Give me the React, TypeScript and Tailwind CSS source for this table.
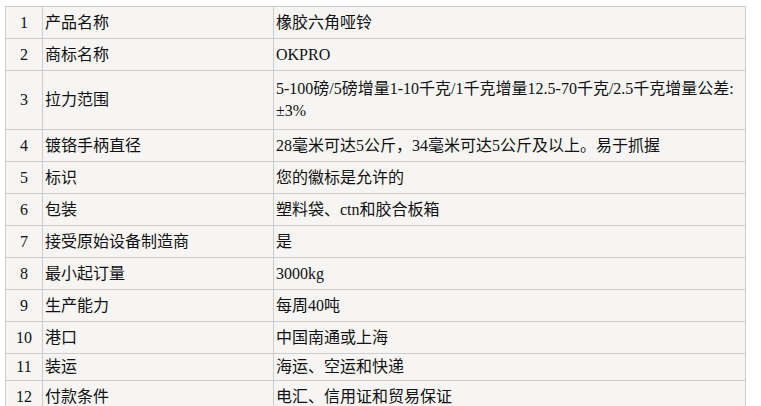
const rows: { no: number; name: string; value: React.ReactNode; h: string }[] = [
  { no: 1, name: "产品名称", value: "橡胶六角哑铃", h: "h-[32px]" },
  { no: 2, name: "商标名称", value: "OKPRO", h: "h-[32px]" },
  {
    no: 3,
    name: "拉力范围",
    value: (
      <>
        5-100磅/5磅增量1-10千克/1千克增量12.5-70千克/2.5千克增量公差:
        <br />
        ±3%
      </>
    ),
    h: "h-[59px]",
  },
  { no: 4, name: "镀铬手柄直径", value: "28毫米可达5公斤，34毫米可达5公斤及以上。易于抓握", h: "h-[32px]" },
  { no: 5, name: "标识", value: "您的徽标是允许的", h: "h-[32px]" },
  { no: 6, name: "包装", value: "塑料袋、ctn和胶合板箱", h: "h-[32px]" },
  { no: 7, name: "接受原始设备制造商", value: "是", h: "h-[32px]" },
  { no: 8, name: "最小起订量", value: "3000kg", h: "h-[32px]" },
  { no: 9, name: "生产能力", value: "每周40吨", h: "h-[32px]" },
  { no: 10, name: "港口", value: "中国南通或上海", h: "h-[32px]" },
  { no: 11, name: "装运", value: "海运、空运和快递", h: "h-[27px]" },
  { no: 12, name: "付款条件", value: "电汇、信用证和贸易保证", h: "h-[32px]" },
];

export default function App() {
  return (
    <div className="min-h-screen bg-white pl-[5px] pt-[6px] font-['Liberation_Serif','Noto_Sans_CJK_SC',serif] text-[16px] text-[#111]">
      <table className="w-[741px] table-fixed border-collapse bg-[#f6f5f3]">
        <colgroup>
          <col className="w-[37px]" />
          <col className="w-[231px]" />
          <col />
        </colgroup>
        <tbody>
          {rows.map((r) => (
            <tr key={r.no} className={r.h}>
              <td className="border border-[#cccccc] p-0 text-center align-middle leading-[22px]">
                {r.no}
              </td>
              <td className="border border-[#cccccc] px-[2px] py-0 align-middle leading-[22px]">
                {r.name}
              </td>
              <td className="border border-[#cccccc] px-[2px] py-0 align-middle leading-[22px]">
                {r.value}
              </td>
            </tr>
          ))}
        </tbody>
      </table>
    </div>
  );
}
